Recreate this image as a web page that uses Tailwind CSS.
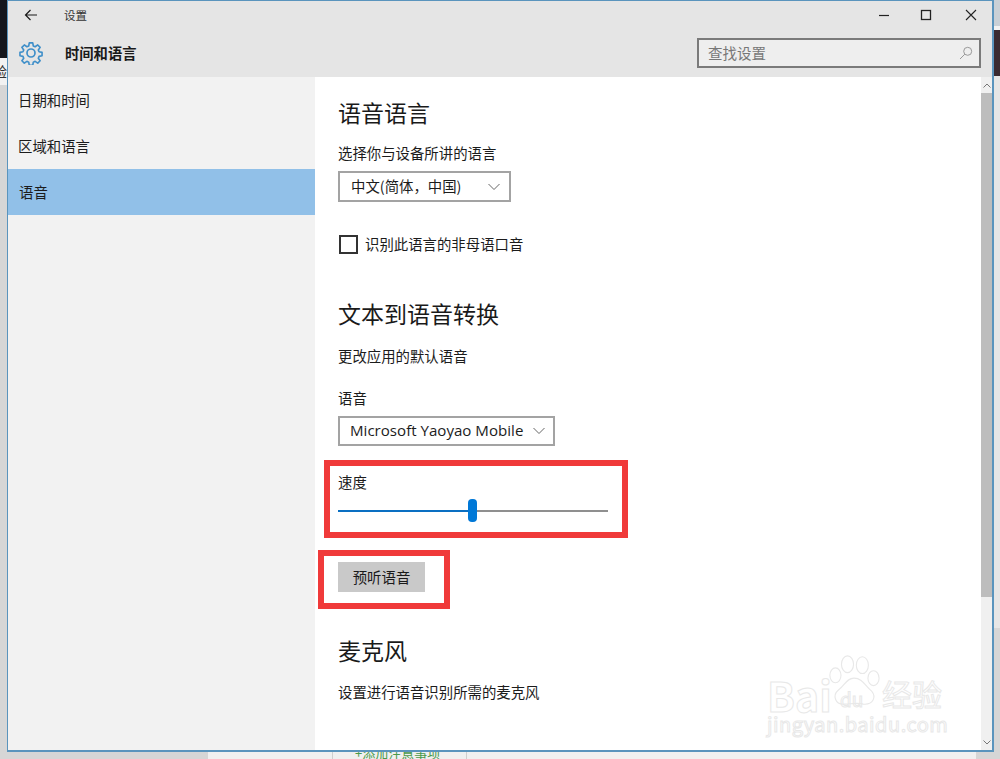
<!DOCTYPE html>
<html lang="zh-CN">
<head>
<meta charset="utf-8">
<script src="https://cdn.jsdelivr.net/npm/@tailwindcss/browser@4"></script>
<title>设置</title>
</head>
<body class="relative h-[759px] w-[1000px] overflow-hidden bg-[#d6d6d6] font-['Noto_Sans_CJK_SC','Noto_Sans',sans-serif] text-[#1c1c1c]">
  <!-- desktop behind the window -->
  <div class="absolute left-0 top-0 h-[58px] w-[8px] bg-[#14161c]"></div>
  <div class="absolute left-0 top-[58px] h-[27px] w-[8px] overflow-hidden bg-[#f2f2f2] text-[14px] leading-[27px] text-[#333]"><span class="ml-[-7px]">验</span></div>
  <div class="absolute right-0 top-0 h-[26px] w-[8px] bg-[#c9d0d6]"></div>
  <div class="absolute right-0 top-[26px] h-[4px] w-[8px] bg-[#f2f2f2]"></div>
  <div class="absolute right-0 top-[30px] h-[46px] w-[8px] bg-[#3a2a30]"></div>
  <div class="absolute right-0 top-[76px] h-[552px] w-[8px] bg-[#e6e6e6]"></div>
  <div class="absolute left-[208px] top-[752px] h-[7px] w-[768px] bg-[#f0f0f0]"></div>
  <div class="absolute left-[332px] top-[752px] h-[7px] w-px bg-[#cfcfcf]"></div>
  <div class="absolute left-[466px] top-[752px] h-[7px] w-px bg-[#cfcfcf]"></div>
  <div class="absolute left-[355px] top-[743px] text-[13px] leading-[19px] text-[#4a9a4a]">+添加注意事项</div>

  <!-- settings window -->
  <div class="absolute left-[7px] top-0 flex h-[752px] w-[987px] flex-col border border-r-2 border-b-2 border-[#5a94bd] bg-white">
    <div class="relative z-10 h-[76px] shrink-0 bg-[#e5e5e5]">
      <div class="flex h-[28px] items-center">
        <svg class="ml-[16px] h-[14px] w-[14px]" viewBox="0 0 14 14" fill="none" stroke="#1a1a1a" stroke-width="1.2"><path d="M13 7H1.5M6.5 2 1.5 7l5 5"/></svg>
        <span class="ml-[26px] text-[11.5px] leading-[16px] text-[#333]">设置</span>
        <div class="ml-auto flex items-center">
          <svg class="mr-[30px] h-[12px] w-[12px]" viewBox="0 0 12 12" fill="none" stroke="#222" stroke-width="1.2"><path d="M1 6.500h10"/></svg>
          <svg class="mr-[33px] h-[12px] w-[12px]" viewBox="0 0 12 12" fill="none" stroke="#222" stroke-width="1.3"><rect x="1.500" y="1.500" width="9" height="9"/></svg>
          <svg class="mr-[15px] h-[12px] w-[12px]" viewBox="0 0 12 12" fill="none" stroke="#222" stroke-width="1.1"><path d="M1 1l10 10M11 1 1 11"/></svg>
        </div>
      </div>
      <div class="flex h-[48px] items-center">
        <svg class="ml-[11px] h-[24px] w-[24px]" viewBox="0 0 24 24" fill="none" stroke="#3f8fc9" stroke-width="1.7" stroke-linejoin="round"><circle cx="12" cy="12" r="4"/><path d="M10.200 1.500h3.600l.6 3.200 1.900.8 2.700-1.900 2.500 2.500-1.900 2.700.8 1.900 3.100.6v3.600l-3.100.6-.8 1.900 1.900 2.700-2.500 2.500-2.700-1.900-1.900.8-.6 3.200h-3.600l-.6-3.200-1.900-.8-2.700 1.900-2.500-2.500 1.900-2.700-.8-1.900-3.100-.6v-3.600l3.100-.6.8-1.900-1.900-2.700 2.500-2.500 2.700 1.900 1.900-.8z" transform="translate(.5 .5) scale(.96)"/></svg>
        <span class="ml-[22px] text-[14.3px] font-bold leading-[20px] text-[#1a1a1a]">时间和语言</span>
        <div class="ml-auto mr-[11px] flex h-[30px] w-[284px] items-center border-2 border-[#7a7a7a] bg-[#eeeeee] pl-[9px] pr-[6px]">
          <span class="text-[14.5px] leading-[20px] text-[#777]">查找设置</span>
          <svg class="ml-auto h-[14px] w-[14px]" viewBox="0 0 14 14" fill="none" stroke="#999" stroke-width="1"><circle cx="8.700" cy="5.300" r="4"/><path d="M5.800 8.200 1 13"/></svg>
        </div>
      </div>
    </div>
    <div class="flex min-h-0 flex-1">
      <nav class="w-[307px] shrink-0 bg-[#f2f2f2] text-[14.4px]">
        <div class="flex h-[46px] items-center pl-[10px] pb-[1px]">日期和时间</div>
        <div class="flex h-[46px] items-center pl-[10px] pb-[1px]">区域和语言</div>
        <div class="flex h-[46px] items-center bg-[#91c0e8] pl-[11px] pb-[1px]">语音</div>
      </nav>
      <main class="relative flex-1 overflow-hidden pl-[23px] text-[14.4px]">
        <h2 class="mt-[18px] text-[23px] leading-[34px] text-[#1a1a1a]">语音语言</h2>
        <p class="mt-[14px] leading-[20px]">选择你与设备所讲的语言</p>
        <div class="mt-[8px] flex h-[31px] w-[173px] items-center border-2 border-[#a3a3a3] pl-[11px] pr-[9px]">
          <span class="pb-[2px] text-[14.4px] leading-[20px]">中文(简体，中国)</span>
          <svg class="ml-auto h-[8px] w-[12px]" viewBox="0 0 12 8" fill="none" stroke="#666" stroke-width="1"><path d="M.5 1 6 6.500 11.500 1"/></svg>
        </div>
        <label class="mt-[32px] flex h-[20px] items-center">
          <span class="ml-px h-[19px] w-[19px] border-2 border-[#333]"></span>
          <span class="ml-[7px] leading-[20px]">识别此语言的非母语口音</span>
        </label>
        <h2 class="mt-[42px] text-[23px] leading-[34px] text-[#1a1a1a]">文本到语音转换</h2>
        <p class="mt-[16px] leading-[20px]">更改应用的默认语音</p>
        <p class="mt-[22px] leading-[20px]">语音</p>
        <div class="mt-[8px] flex h-[30px] w-[217px] items-center border-2 border-[#a3a3a3] pl-[10px] pr-[8px]">
          <span class="pb-[2px] font-['Open_Sans','Noto_Sans',sans-serif] text-[15.1px] leading-[20px]">Microsoft Yaoyao Mobile</span>
          <svg class="ml-auto h-[8px] w-[12px]" viewBox="0 0 12 8" fill="none" stroke="#666" stroke-width="1"><path d="M.5 1 6 6.500 11.500 1"/></svg>
        </div>
        <p class="mt-[26px] leading-[20px]">速度</p>
        <div class="relative mt-[7px] h-[24px] w-[270px]">
          <div class="absolute left-0 top-[11px] h-[2px] w-[135px] bg-[#0a6fc2]"></div>
          <div class="absolute left-[135px] top-[11px] h-[2px] w-[135px] bg-[#8f8f8f]"></div>
          <div class="absolute left-[130px] top-0 h-[23px] w-[9px] rounded-[4px] bg-[#0078d7]"></div>
        </div>
        <button class="mt-[39px] block h-[30px] w-[87px] bg-[#c9c9c9] text-[14.4px] leading-[20px] text-[#1a1a1a]">预听语音</button>
        <h2 class="mt-[41px] text-[23px] leading-[34px] text-[#1a1a1a]">麦克风</h2>
        <p class="mt-[15px] leading-[20px]">设置进行语音识别所需的麦克风</p>

        <!-- watermark -->
        <div class="absolute left-[450px] top-[575px] h-[100px] w-[190px] text-transparent [-webkit-text-stroke:1px_#e8e8e8]">
          <svg class="absolute left-[63px] top-0 h-[56px] w-[52px]" viewBox="0 0 56 56" fill="none" stroke="#e8e8e8" stroke-width="1.2"><ellipse cx="21" cy="11" rx="6.500" ry="9"/><ellipse cx="37" cy="12" rx="6.500" ry="9"/><ellipse cx="8" cy="23" rx="6" ry="8"/><ellipse cx="49" cy="26" rx="6" ry="8"/><path d="M28 26c-8 0-10 8-17 13-6 5-4 16 7 15 6 0 14-2 20 0 11 1 14-8 9-14-7-6-10-14-19-14z"/></svg>
          <span class="absolute left-[2px] top-[18px] text-[41px] font-bold leading-[48px]">Bai</span>
          <span class="absolute left-[75px] top-[35px] text-[19px] leading-[24px]">du</span>
          <span class="absolute left-[117px] top-[23px] text-[30px] leading-[36px]">经验</span>
          <span class="absolute left-[2px] top-[59px] text-[20px] leading-[26px] tracking-[.5px]">jingyan.baidu.com</span>
        </div>

        <!-- scrollbar -->
        <div class="absolute inset-y-0 right-0 flex w-[11px] flex-col bg-[#f0f0f0]">
          <div class="flex h-[16px] items-center justify-center"><svg class="h-[5px] w-[8px]" viewBox="0 0 8 5" fill="none" stroke="#777" stroke-width="1"><path d="M.5 4.500 4 1l3.500 3.500"/></svg></div>
          <div class="h-[504px] bg-[#bdbdbd]"></div>
          <div class="mt-auto flex h-[16px] items-center justify-center"><svg class="h-[5px] w-[8px]" viewBox="0 0 8 5" fill="none" stroke="#777" stroke-width="1"><path d="M.5.500 4 4l3.500-3.500"/></svg></div>
        </div>
      </main>
    </div>
  </div>

  <!-- red annotation boxes -->
  <div class="absolute left-[324px] top-[460px] h-[78px] w-[304px] border-[6px] border-[#f03a3a]"></div>
  <div class="absolute left-[318px] top-[550px] h-[59px] w-[132px] border-[6px] border-[#f03a3a]"></div>
</body>
</html>
